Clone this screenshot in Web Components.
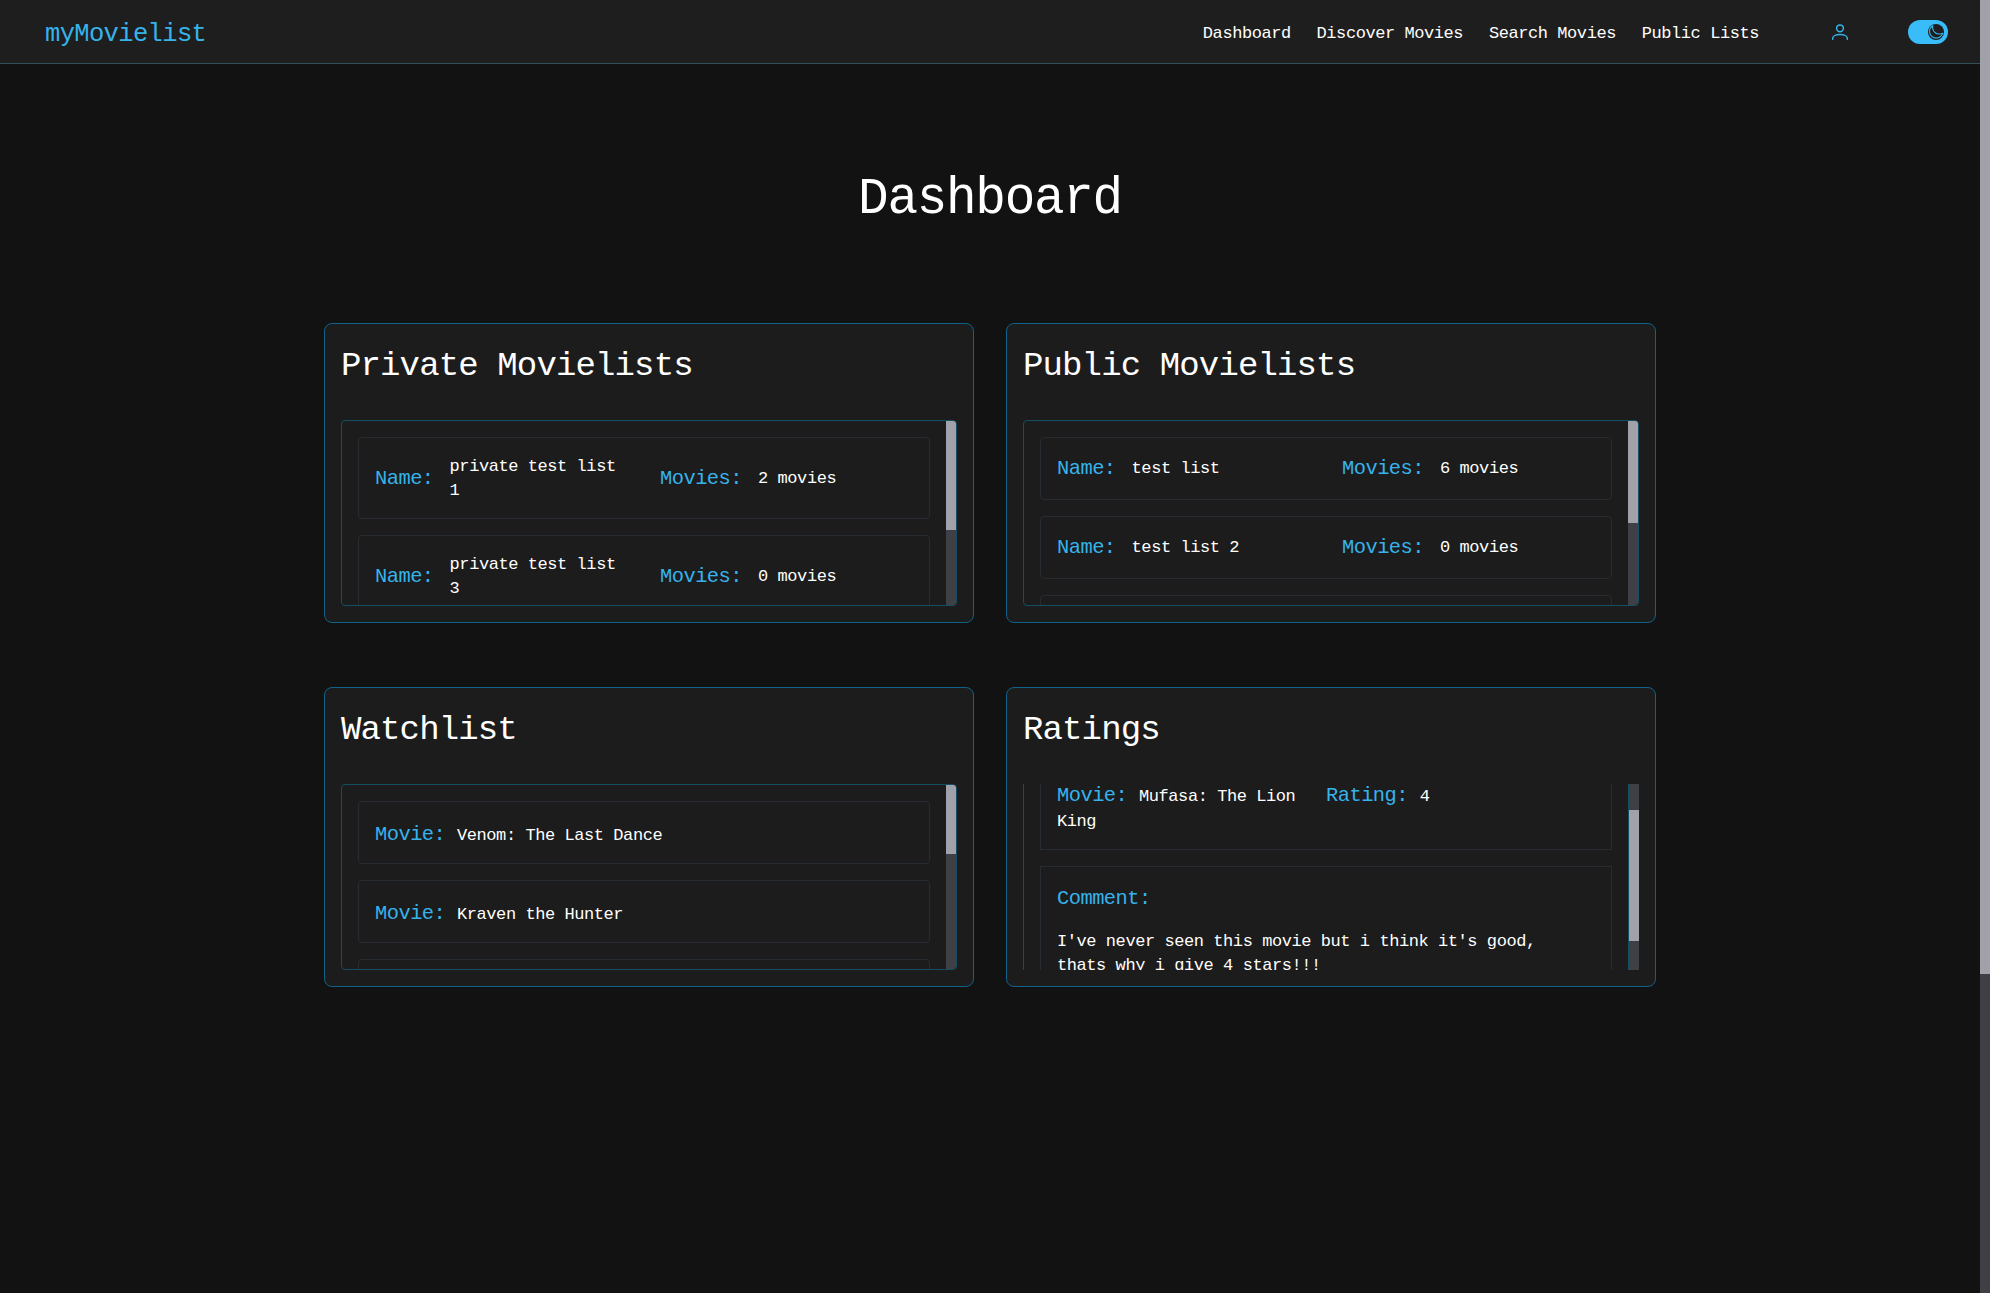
<!DOCTYPE html>
<html lang="en">
<head>
<meta charset="utf-8">
<title>myMovielist</title>
<style>
html,body{margin:0;height:100%;background:#121212;overflow:hidden}
body{font-family:"Liberation Mono","DejaVu Sans Mono",monospace;color:#fff;font-size:17px;line-height:24px;letter-spacing:-.0254em;--sky:#38bdf8;--label:#36b3eb}
</style>
</head>
<body>
<movie-app></movie-app>
<script>
const define = (name, html) => customElements.define(name, class extends HTMLElement {
  constructor() {
    super();
    this.attachShadow({ mode: 'open' }).innerHTML = html;
  }
});

/* Vertical scrollbar: --from and --size place the thumb on the track */
define('scroll-bar', `<style>
:host{display:flow-root;flex:none;width:10px;background:#3f3f46}
i{display:block;margin-top:var(--from,0px);height:var(--size);background:#a1a1aa}
</style><i></i>`);

define('user-icon', `<style>
:host{display:block;width:24px;height:24px}
svg{display:block}
</style><svg width="24" height="24" viewBox="0 0 24 24" fill="none" stroke="#36b3eb" stroke-width="1.5" stroke-linecap="round"><circle cx="12" cy="8.300" r="3.4"/><path d="M4.700 19.200v-1c0-2.1 3.2-3.6 7.300-3.600s7.300 1.500 7.300 3.600v1"/></svg>`);

define('theme-toggle', `<style>
:host{display:flex;align-items:center;justify-content:flex-end;box-sizing:border-box;width:40px;height:24px;padding:0 4px;border-radius:12px;background:var(--sky)}
svg{display:block}
</style><svg width="16" height="16" viewBox="0 0 16 16"><circle cx="8" cy="8" r="8" fill="#1e1e1e"/><g transform="translate(-.4 -.1) scale(.68)"><path d="M21.752 15.002A9.720 9.720 0 0 1 18 15.750c-5.385 0-9.750-4.365-9.750-9.750 0-1.330.266-2.597.748-3.752A9.753 9.753 0 0 0 3 11.250C3 16.635 7.365 21 12.750 21a9.753 9.753 0 0 0 9.002-5.998Z" transform="rotate(-8 12 12)" fill="none" stroke="#38bdf8" stroke-width="1.5" stroke-linejoin="round"/></g></svg>`);

define('nav-link', `<style>:host{display:block;white-space:nowrap}</style><slot></slot>`);

define('site-header', `<style>
:host{display:flex;align-items:center;box-sizing:border-box;height:64px;padding:0 32px 0 45px;background:#1e1e1e;border-bottom:1px solid #344f5c}
.brand{flex:1;font-size:25.5px;letter-spacing:-.0254em;line-height:36px;padding-top:6px;color:var(--label)}
nav{display:flex;gap:25.8px;margin-right:69px;padding-top:5px}
user-icon{margin-right:56px}
</style>
<div class="brand">myMovielist</div>
<nav><nav-link>Dashboard</nav-link><nav-link>Discover Movies</nav-link><nav-link>Search Movies</nav-link><nav-link>Public Lists</nav-link></nav>
<user-icon></user-icon><theme-toggle></theme-toggle>`);

define('page-title', `<style>
:host{display:block;text-align:center;margin:99px 0 87px;height:73px}
h1{margin:0;font:inherit;font-size:51px;letter-spacing:-.0254em;line-height:73px}
</style><h1><slot></slot></h1>`);

define('list-panel', `<style>
:host{display:flex;flex-direction:column;box-sizing:border-box;height:300px;padding:16px;border:1px solid #11628a;border-radius:8px;background:#1c1c1c}
h2{margin:0 0 31px;padding-top:4px;font:inherit;font-size:34px;letter-spacing:-.0254em;line-height:45px}
.box{box-sizing:border-box;height:186px;display:flex;border:1px solid #154d62;border-radius:4px;overflow:hidden}
.items{flex:1;min-width:0;padding:16px 16px 0;display:flex;flex-direction:column;gap:16px}
:host([scrolled]) .box{border-width:0 0 0 1px;border-radius:0}
:host([scrolled]) .items{justify-content:flex-end;padding:0 16px;border-right:1px solid #154d62}
::slotted([slot=title]){letter-spacing:-.0254em}
</style><h2><slot name="title"></slot></h2><div class="box"><div class="items"><slot></slot></div><slot name="bar"></slot></div>`);

const card = `box-sizing:border-box;flex:none;padding:16px;border:1px solid #262c31;border-radius:4px;`;
const label = `font-size:20.4px;letter-spacing:-.0254em;color:var(--label);`;

define('list-row', `<style>
:host{${card}display:grid;grid-template-columns:1fr 1fr;gap:32px;min-height:63px}
div{display:flex;align-items:center;gap:16px}
.k{${label}line-height:28.8px;padding-top:1px;margin-bottom:-1px}
.v{padding-top:.6px;margin-bottom:-.6px}
</style><div><span class="k">Name:</span><span class="v"><slot name="name"></slot></span></div><div><span class="k">Movies:</span><span class="v"><slot name="count"></slot></span></div>`);

define('watch-row', `<style>
:host{${card}display:block;height:63px}
p{margin:0;line-height:28.8px;padding-top:2.6px}
.k{${label}white-space:pre}
</style><p><span class="k">Movie: </span><slot></slot></p>`);

define('rating-row', `<style>
:host{${card}display:grid;grid-template-columns:1fr 1fr;border-radius:0;border-top:0;height:66px;padding-top:0}
p{margin:-.6px 0 0;line-height:25px}
.k{${label}white-space:pre}
</style><p><span class="k">Movie: </span><slot name="movie"></slot></p><p><span class="k">Rating: </span><slot name="rating"></slot></p>`);

define('comment-row', `<style>
:host{${card}display:flow-root;height:104px;border-bottom:0;border-radius:0;padding-bottom:0;overflow:hidden}
.k{${label}line-height:28.8px;padding-top:2px}
p{margin:16px 32px 0 0}
</style><div class="k">Comment:</div><p><slot></slot></p>`);

define('movie-app', `<style>
:host{display:flex;height:100vh}
.page{flex:1;min-width:0}
main{display:flow-root}
.grid{display:grid;grid-template-columns:650px 650px;gap:64px 32px;justify-content:center}
</style>
<div class="page"><site-header></site-header>
<main><page-title>Dashboard</page-title>
<div class="grid">
<list-panel><span slot="title">Private Movielists</span>
<list-row><span slot="name">private test list 1</span><span slot="count">2 movies</span></list-row>
<list-row><span slot="name">private test list 3</span><span slot="count">0 movies</span></list-row>
<scroll-bar slot="bar" style="--size:109px"></scroll-bar></list-panel>
<list-panel><span slot="title">Public Movielists</span>
<list-row><span slot="name">test list</span><span slot="count">6 movies</span></list-row>
<list-row><span slot="name">test list 2</span><span slot="count">0 movies</span></list-row>
<list-row></list-row>
<scroll-bar slot="bar" style="--size:102px"></scroll-bar></list-panel>
<list-panel><span slot="title">Watchlist</span>
<watch-row>Venom: The Last Dance</watch-row>
<watch-row>Kraven the Hunter</watch-row>
<watch-row></watch-row>
<scroll-bar slot="bar" style="--size:69px"></scroll-bar></list-panel>
<list-panel scrolled><span slot="title">Ratings</span>
<rating-row><span slot="movie">Mufasa: The Lion King</span><span slot="rating">4</span></rating-row>
<comment-row>I've never seen this movie but i think it's good, thats why i give 4 stars!!!</comment-row>
<scroll-bar slot="bar" style="--from:26px;--size:131px"></scroll-bar></list-panel>
</div></main></div>
<scroll-bar style="--size:974px"></scroll-bar>`);
</script>
</body>
</html>
